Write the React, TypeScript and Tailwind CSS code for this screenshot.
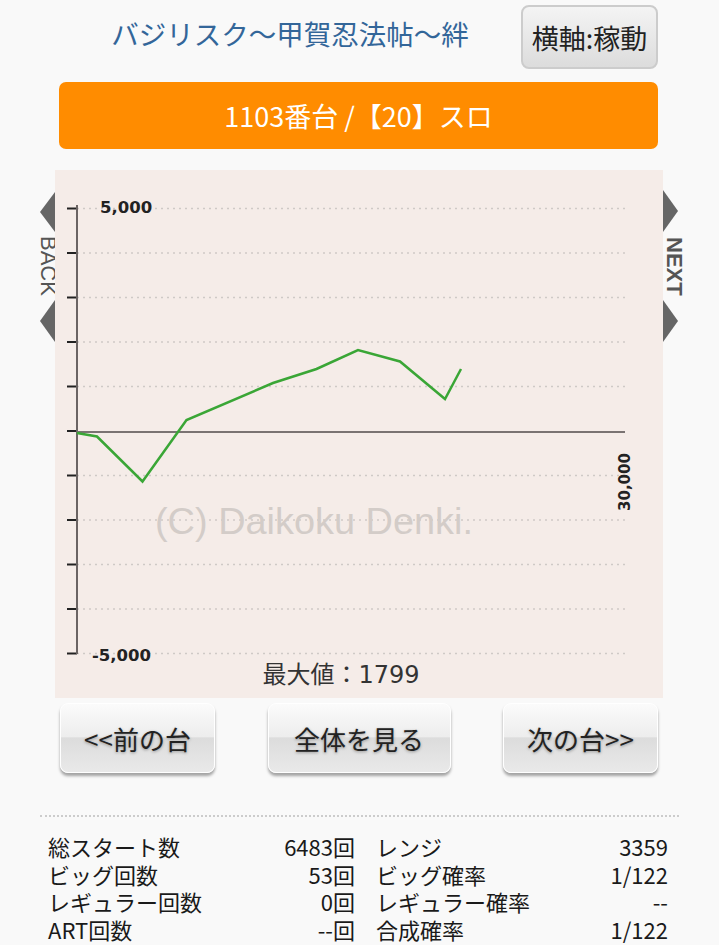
import React from 'react';

const gridYs = [38.5, 83, 127.5, 172, 216.5, 261, 305.5, 350, 394.5, 439, 483.5];

const graphPoints = [
  [22, 263], [42, 266.5], [87.5, 311.5], [131.5, 250], [218, 213], [261.5, 199],
  [303, 180], [345, 191.5], [390, 229], [406, 199],
];

const stats = [
  ['総スタート数', '6483回', 'レンジ', '3359'],
  ['ビッグ回数', '53回', 'ビッグ確率', '1/122'],
  ['レギュラー回数', '0回', 'レギュラー確率', '--'],
  ['ART回数', '--回', '合成確率', '1/122'],
];

function Graph() {
  return (
    <svg width="608" height="528" viewBox="0 0 608 528">
      {/* 点線グリッド */}
      {gridYs.map((y, i) =>
        i === 5 ? null : (
          <line key={i} x1="22" y1={y} x2="570" y2={y} stroke="#cfc9c6" strokeWidth="1.5" strokeDasharray="2 4" />
        )
      )}
      {/* 目盛り */}
      {gridYs.map((y, i) => (
        <line key={'t' + i} x1="12" y1={y} x2="22" y2={y} stroke="#222" strokeWidth="2" />
      ))}
      <line x1="22" y1="35" x2="22" y2="484" stroke="#6b6463" strokeWidth="2" />
      <line x1="22" y1="262" x2="570" y2="262" stroke="#7a7372" strokeWidth="2" />

      <text x="100" y="364" fontFamily="'Liberation Sans', Arial, sans-serif" fontSize="36" fill="#d3ccc8" textLength="318" lengthAdjust="spacingAndGlyphs">
        (C) Daikoku Denki.
      </text>

      <polyline
        points={graphPoints.map((p) => p.join(',')).join(' ')}
        fill="none"
        stroke="#3aa636"
        strokeWidth="2.5"
        strokeLinejoin="miter"
      />

      <text x="45" y="43" fontFamily="'DejaVu Sans', sans-serif" fontSize="16.5" fontWeight="bold" fill="#222">5,000</text>
      <text x="37" y="491" fontFamily="'DejaVu Sans', sans-serif" fontSize="16.5" fontWeight="bold" fill="#222">-5,000</text>
      <text
        x="570"
        y="312"
        transform="rotate(-90 570 312)"
        textAnchor="middle"
        dominantBaseline="central"
        fontFamily="'DejaVu Sans', sans-serif"
        fontSize="15"
        fontWeight="bold"
        fill="#222"
      >
        30,000
      </text>
      <text x="286" y="513" textAnchor="middle" fontFamily="'DejaVu Sans', 'Noto Sans CJK JP', sans-serif" fontSize="24" fill="#333">
        最大値：1799
      </text>
    </svg>
  );
}

function NavButton({ label, width }: { label: string; width: string }) {
  return (
    <button
      className={`${width} h-[70px] rounded-[8px] border border-white bg-[linear-gradient(to_bottom,#fbfbfb_0%,#ededed_48%,#dcdcdc_50%,#e9e9e9_100%)] shadow-[0_3px_3px_rgba(0,0,0,0.35)] text-[26px] text-[#222] [text-shadow:0_1px_3px_rgba(0,0,0,0.35)] flex items-center justify-center`}
    >
      {label}
    </button>
  );
}

export default function App() {
  return (
    <div className="w-[719px] min-h-[945px] bg-[#f9f9f9] font-['Noto_Sans_CJK_JP','Noto_Sans',sans-serif] overflow-hidden">
      {/* ヘッダー */}
      <div className="flex items-start pl-[59px] pt-[5px] w-[658px]">
        <div className="flex-1 h-[58px] flex items-center justify-center text-[27.5px] text-[#336699] leading-none">
          バジリスク〜甲賀忍法帖〜絆
        </div>
        <button className="w-[137px] h-[64px] rounded-[8px] border-2 border-[#cccccc] bg-[linear-gradient(to_bottom,#f4f4f4,#dcdcdc)] text-[27px] text-[#222] flex items-center justify-center leading-none">
          横軸:稼動
        </button>
      </div>

      <div className="ml-[59px] mt-[13px] w-[599px] h-[67px] rounded-[7px] bg-[#ff8c00] text-white text-[27px] flex items-center justify-center leading-none">
        1103番台 /【20】スロ
      </div>

      {/* グラフ */}
      <div className="flex mt-[21px] pl-[40px]">
        <div className="w-[15px] pt-[22px] flex flex-col items-center">
          <svg width="15" height="40" viewBox="0 0 15 40">
            <polygon points="15,0 0,20 15,40" fill="#666" />
          </svg>
          <div className="h-[68px] flex items-center justify-center">
            <span className="[writing-mode:vertical-rl] text-[22px] leading-none text-[#555] font-['Liberation_Sans',sans-serif]">BACK</span>
          </div>
          <svg width="15" height="42" viewBox="0 0 15 42">
            <polygon points="15,0 0,21 15,42" fill="#666" />
          </svg>
        </div>

        <div className="w-[608px] h-[528px] bg-[#f5ece8]">
          <Graph />
        </div>

        <div className="w-[17px] pt-[20px] flex flex-col">
          <svg width="16" height="42" viewBox="0 0 16 42">
            <polygon points="0,0 15,21 0,42" fill="#666" />
          </svg>
          <div className="h-[68px] flex items-center justify-start">
            <span className="[writing-mode:vertical-rl] text-[22px] leading-none font-bold text-[#555] font-['Liberation_Sans',sans-serif]">NEXT</span>
          </div>
          <svg width="16" height="42" viewBox="0 0 16 42">
            <polygon points="0,0 15,21 0,42" fill="#666" />
          </svg>
        </div>
      </div>

      {/* ボタン */}
      <div className="flex justify-between ml-[60px] mt-[5px] w-[598px]">
        <NavButton label="<<前の台" width="w-[155px]" />
        <NavButton label="全体を見る" width="w-[183px]" />
        <NavButton label="次の台>>" width="w-[155px]" />
      </div>

      <div className="mx-[40px] mt-[42px] border-t-2 border-dotted border-[#cccccc]" />

      {/* 集計 */}
      <div className="flex gap-[21px] pl-[48px] mt-[15px] text-[22px] text-[#1a1a1a] leading-none">
        <div className="w-[307px]">
          {stats.map((r) => (
            <div key={r[0]} className="flex justify-between items-center h-[27.7px]">
              <span>{r[0]}</span>
              <span>{r[1]}</span>
            </div>
          ))}
        </div>
        <div className="w-[292px]">
          {stats.map((r) => (
            <div key={r[2]} className="flex justify-between items-center h-[27.7px]">
              <span>{r[2]}</span>
              <span>{r[3]}</span>
            </div>
          ))}
        </div>
      </div>
    </div>
  );
}
